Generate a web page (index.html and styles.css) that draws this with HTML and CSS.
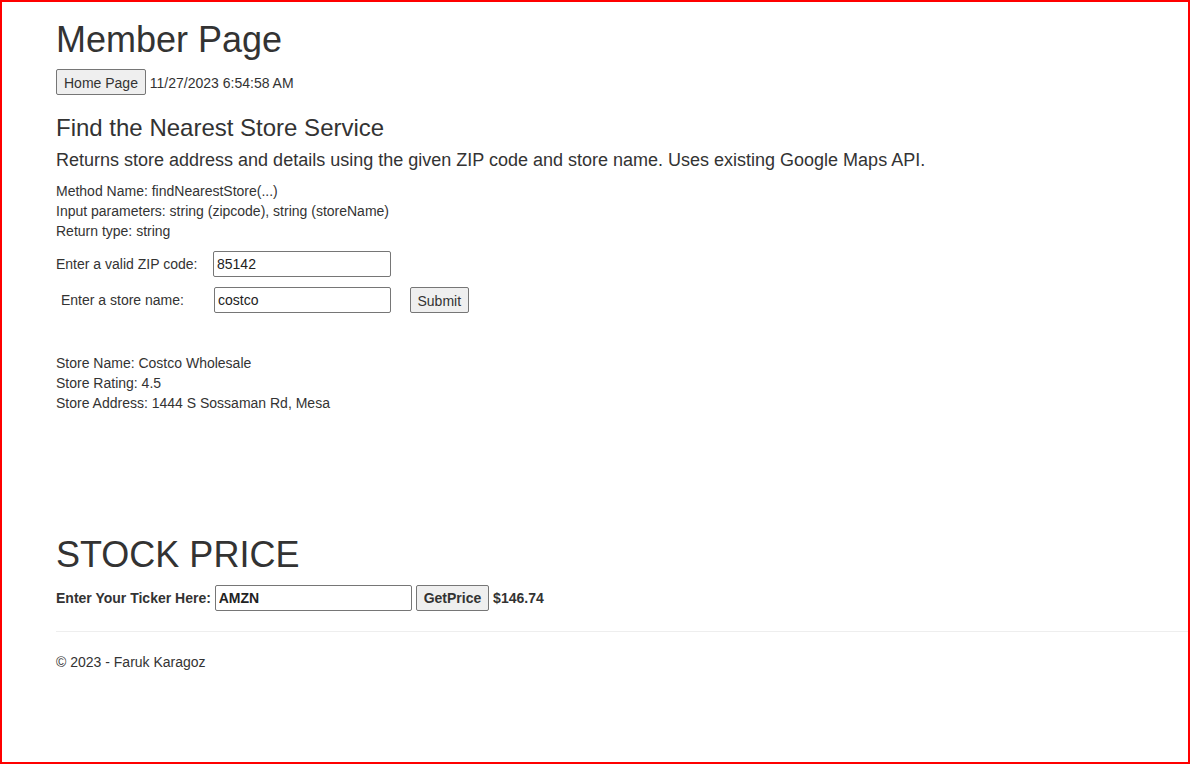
FILE: index.html
```html
<!DOCTYPE html>
<html lang="en">
<head>
<meta charset="utf-8">
<title>Member Page</title>
<link rel="stylesheet" href="styles.css">
</head>
<body>
<div class="frame">
  <div class="content">
    <h1 class="page-title">Member Page</h1>
    <div class="nav-line"><button class="btn" type="button">Home Page</button> 11/27/2023 6:54:58 AM</div>

    <h3 class="service-title">Find the Nearest Store Service</h3>
    <p class="service-desc">Returns store address and details using the given ZIP code and store name. Uses existing Google Maps API.</p>

    <div class="info">
      <div>Method Name: findNearestStore(...)</div>
      <div>Input parameters: string (zipcode), string (storeName)</div>
      <div>Return type: string</div>
    </div>

    <div class="form-row">
      <span class="label label-zip">Enter a valid ZIP code:</span>
      <input class="field field-zip" type="text" value="85142">
    </div>
    <div class="form-row form-row-second">
      <span class="label label-store">Enter a store name:</span>
      <input class="field field-store" type="text" value="costco">
      <button class="btn btn-submit" type="button">Submit</button>
    </div>

    <div class="results">
      <div>Store Name: Costco Wholesale</div>
      <div>Store Rating: 4.5</div>
      <div>Store Address: 1444 S Sossaman Rd, Mesa</div>
    </div>

    <h1 class="stock-title">STOCK PRICE</h1>
    <div class="ticker-line"><strong>Enter Your Ticker Here: <input class="field field-ticker" type="text" value="AMZN"> <button class="btn btn-bold" type="button">GetPrice</button> $146.74</strong></div>

    <hr class="rule">
    <footer class="footer">
      <p>&copy; 2023 - Faruk Karagoz</p>
    </footer>
  </div>
</div>
</body>
</html>
```

FILE: styles.css
```css
* {
  box-sizing: border-box;
}

html, body {
  margin: 0;
  padding: 0;
  background: #ffffff;
}

body {
  font-family: "Liberation Sans", Arial, Helvetica, sans-serif;
  font-size: 14px;
  line-height: 20px;
  color: #333333;
}

.frame {
  width: 1190px;
  height: 764px;
  border: 2px solid #ff0000;
  overflow: hidden;
}

.content {
  padding: 17.5px 0 0 54px;
}

.page-title,
.stock-title {
  font-size: 36px;
  font-weight: 500;
  line-height: 39.6px;
  margin: 0 0 10px 0;
}

.stock-title {
  margin-top: 122.5px;
}

.nav-line {
  line-height: 20px;
}

.btn {
  font: inherit;
  color: inherit;
  line-height: 20px;
  background: #efefef;
  border: 1px solid #767676;
  border-radius: 2px;
  padding: 2px 7px 1px;
  margin: 0;
  height: 26px;
  vertical-align: baseline;
}

.btn-bold {
  font-weight: bold;
}

.service-title {
  font-size: 24px;
  font-weight: 500;
  line-height: 26.4px;
  margin: 19.5px 0 0 0;
}

.service-desc {
  font-size: 18px;
  line-height: 19.8px;
  margin: 10px 0 0 0;
}

.info {
  margin-top: 10.5px;
}

.form-row {
  display: flex;
  align-items: center;
  margin-top: 10px;
  height: 26px;
}

.label {
  display: block;
  flex: none;
}

.label-zip {
  width: 157px;
}

.label-store {
  width: 158px;
  padding-left: 5px;
}

.field {
  font: inherit;
  color: #000000;
  line-height: 20px;
  height: 26px;
  border: 1px solid #767676;
  border-radius: 2px;
  padding: 2px 3px 2px 3px;
  margin: 0;
  background: #ffffff;
}

.field-zip,
.field-store {
  width: 178px;
  color: #222222;
}

.field-store {
  width: 177px;
}

.btn-submit {
  margin-left: 19px;
  padding-left: 6.5px;
  padding-right: 6.5px;
}

.results {
  margin-top: 39.5px;
}

.ticker-line {
  line-height: 20px;
}

.ticker-line strong {
  font-weight: bold;
}

.field-ticker {
  width: 197px;
  font-weight: bold;
  color: #222222;
  vertical-align: baseline;
}

.rule {
  margin: 20px 0 0 0;
  border: 0;
  border-top: 1px solid #eeeeee;
  height: 0;
}

.footer p {
  margin: 20px 0 0 0;
}
```
